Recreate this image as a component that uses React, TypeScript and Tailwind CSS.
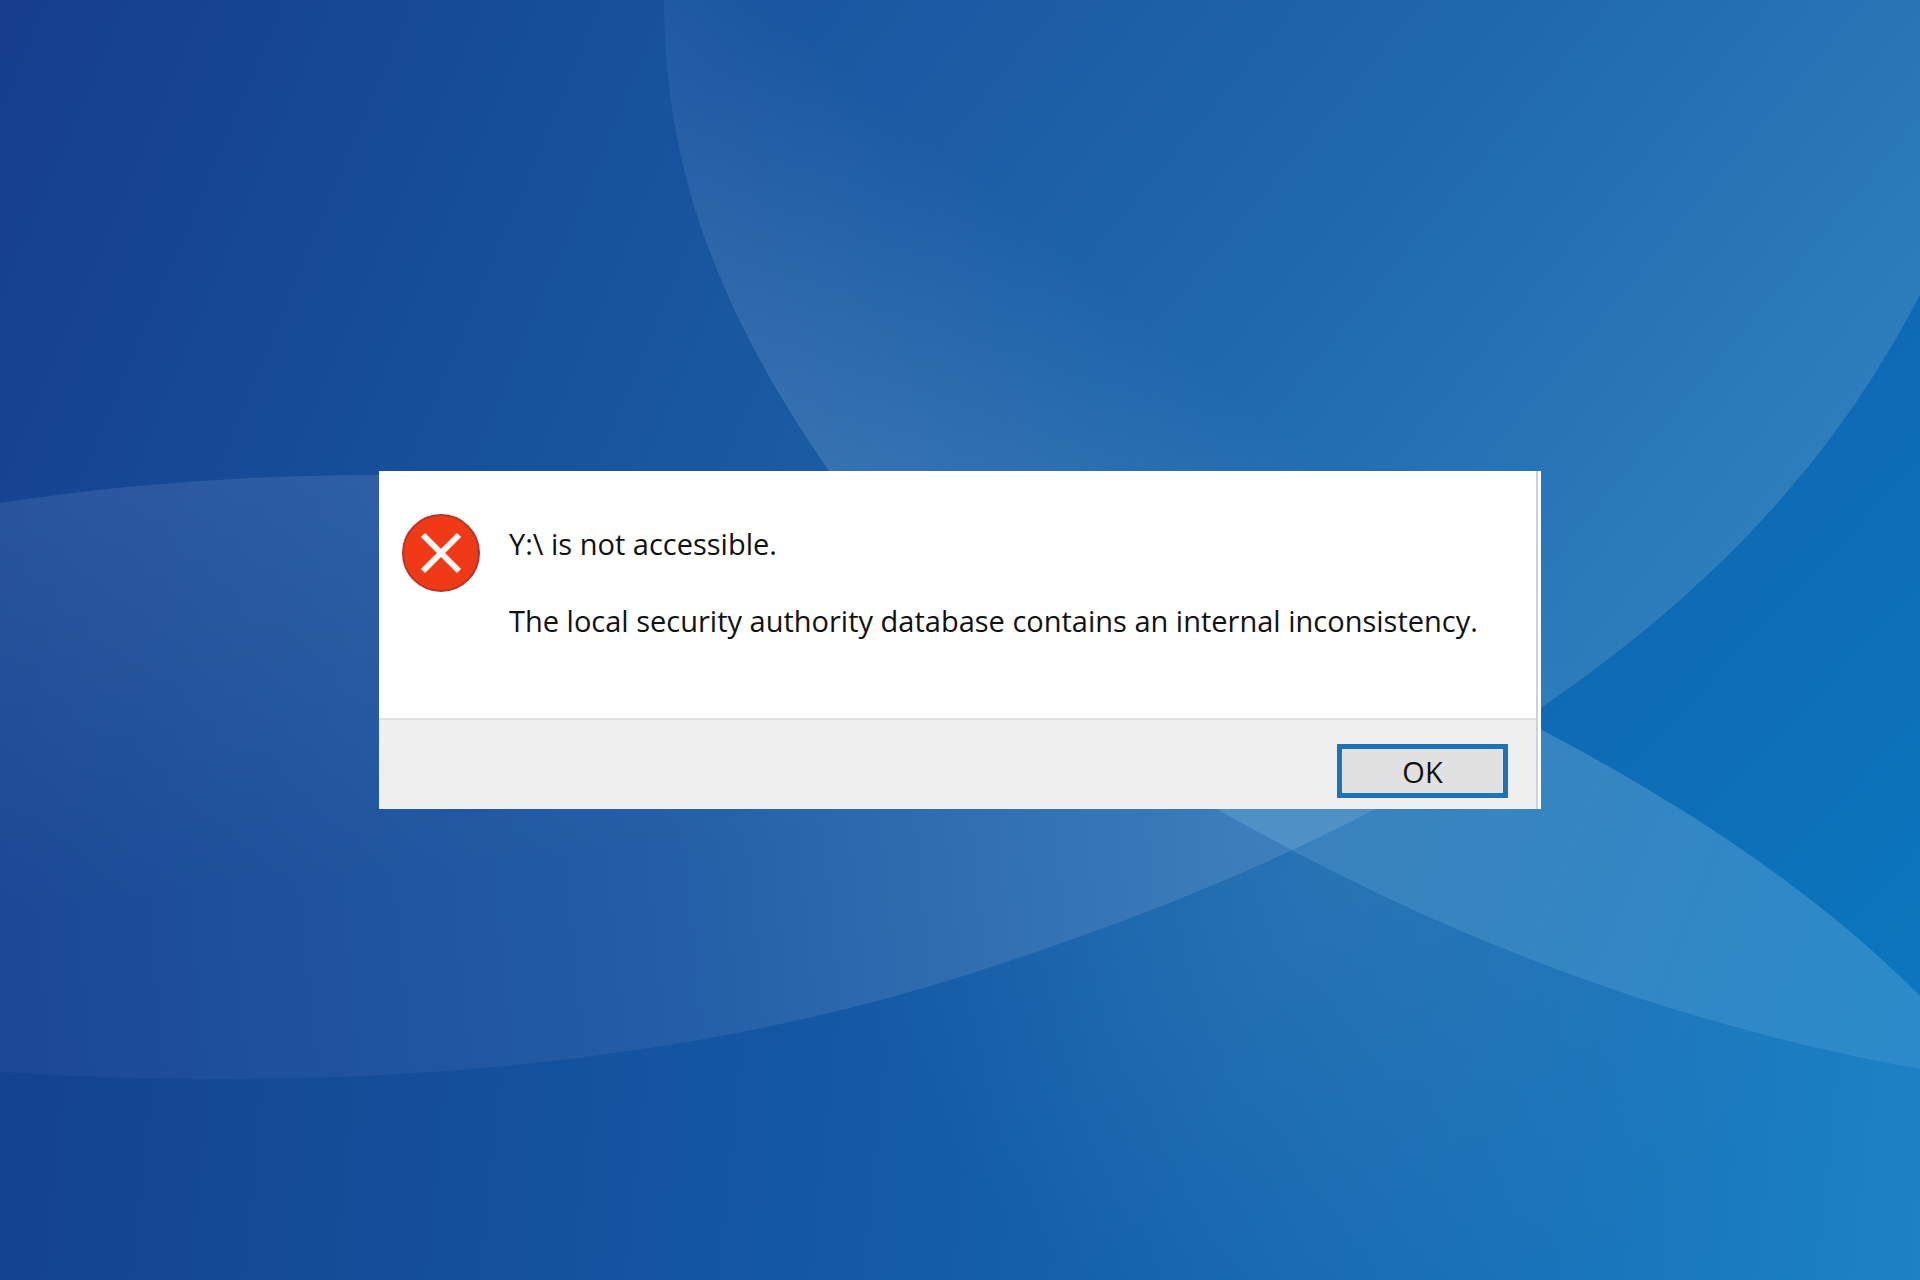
import { useState } from 'react';

// Curves shared by the wallpaper shapes
const ABOVE_SWEEP = 'M0 1072C340 1093 670 1068 960 977C1170 910 1376 826 1542 707C1700 598 1830 470 1920 294V0H0Z';
const ABOVE_ARC = 'M0 503C130 483 260 475 379 475C800 475 1250 570 1542 730C1690 808 1820 895 1920 996V0H0Z';
const RIGHT_OF_BOWL = 'M664 0C664 180 728 325 829 471C930 617 1060 720 1217 809C1420 925 1650 1020 1920 1069V0Z';

function Wallpaper() {
  return (
    <svg
      className="absolute inset-0 h-full w-full"
      viewBox="0 0 1920 1280"
      preserveAspectRatio="none"
      aria-hidden="true"
    >
      <defs>
        <clipPath id="sweep">
          <path d={ABOVE_SWEEP} />
        </clipPath>
        <clipPath id="arc">
          <path d={ABOVE_ARC} />
        </clipPath>
        <linearGradient id="floor" gradientUnits="userSpaceOnUse" x1="0" y1="1080" x2="1920" y2="1280">
          <stop offset="0" stopColor="#14438f" />
          <stop offset="0.5" stopColor="#145ca8" />
          <stop offset="1" stopColor="#1c82c5" />
        </linearGradient>
        <radialGradient id="glow" gradientUnits="userSpaceOnUse" cx="1340" cy="840" r="500">
          <stop offset="0" stopColor="#4083b8" stopOpacity="0.42" />
          <stop offset="1" stopColor="#4083b8" stopOpacity="0" />
        </radialGradient>
        <linearGradient id="lens" gradientUnits="userSpaceOnUse" x1="1330" y1="810" x2="1920" y2="1050">
          <stop offset="0" stopColor="#3a82bd" />
          <stop offset="1" stopColor="#2b8bca" />
        </linearGradient>
        <linearGradient id="gap" gradientUnits="userSpaceOnUse" x1="1540" y1="600" x2="1920" y2="960">
          <stop offset="0" stopColor="#0f68b3" />
          <stop offset="1" stopColor="#0b76bd" />
        </linearGradient>
        <linearGradient id="leaf" gradientUnits="userSpaceOnUse" x1="0" y1="900" x2="1310" y2="770">
          <stop offset="0" stopColor="#1b4895" />
          <stop offset="0.5" stopColor="#235ea6" />
          <stop offset="1" stopColor="#3f81be" />
        </linearGradient>
        <linearGradient id="leafTop" gradientUnits="userSpaceOnUse" x1="200" y1="476" x2="240" y2="900">
          <stop offset="0" stopColor="#ffffff" stopOpacity="0.06" />
          <stop offset="1" stopColor="#ffffff" stopOpacity="0" />
        </linearGradient>
        <linearGradient id="sky" gradientUnits="userSpaceOnUse" x1="0" y1="40" x2="860" y2="400">
          <stop offset="0" stopColor="#163e8c" />
          <stop offset="0.5" stopColor="#164d98" />
          <stop offset="1" stopColor="#1a5ca4" />
        </linearGradient>
        <linearGradient id="bowl" gradientUnits="userSpaceOnUse" x1="780" y1="0" x2="1700" y2="760">
          <stop offset="0" stopColor="#1a56a1" />
          <stop offset="0.5" stopColor="#2069ae" />
          <stop offset="1" stopColor="#3082bf" />
        </linearGradient>
        <linearGradient id="bowlEdge" gradientUnits="userSpaceOnUse" x1="780" y1="500" x2="1020" y2="210">
          <stop offset="0" stopColor="#ffffff" stopOpacity="0.13" />
          <stop offset="1" stopColor="#ffffff" stopOpacity="0" />
        </linearGradient>
      </defs>
      <rect width="1920" height="1280" fill="url(#floor)" />
      <rect width="1920" height="1280" fill="url(#glow)" />
      <path d={RIGHT_OF_BOWL} fill="url(#lens)" />
      <path d={ABOVE_ARC} fill="url(#gap)" />
      <g clipPath="url(#sweep)">
        <rect width="1920" height="1280" fill="url(#leaf)" />
        <rect width="1920" height="1280" fill="url(#leafTop)" />
        <path d={RIGHT_OF_BOWL} fill="#4f90c6" />
        <g clipPath="url(#arc)">
          <rect width="1920" height="1280" fill="url(#sky)" />
          <path d={RIGHT_OF_BOWL} fill="url(#bowl)" />
          <path d={RIGHT_OF_BOWL} fill="url(#bowlEdge)" />
        </g>
      </g>
    </svg>
  );
}

function ErrorIcon() {
  return (
    <svg className="size-20 shrink-0" viewBox="0 0 80 80" aria-hidden="true">
      <circle cx="40" cy="40" r="38" fill="#f03a17" stroke="#b5352a" strokeWidth="2" />
      <path d="M22 22L58 58M58 22L22 58" stroke="#fff8f3" strokeWidth="6" />
    </svg>
  );
}

export default function App() {
  const [open, setOpen] = useState(true);

  return (
    <main className="relative flex min-h-screen items-center justify-center bg-[#164d98]">
      <Wallpaper />
      {open && (
        <div
          role="alertdialog"
          aria-describedby="message"
          className="relative w-full max-w-[1162px] bg-white pr-[3px] font-['Open_Sans','Noto_Sans',sans-serif] text-[29px] leading-[37px] text-[#111111]"
        >
          <div className="border-r-2 border-[#cdd0dc]">
            <div className="flex gap-7 px-[22px] pt-[42px] pb-[79px]">
              <ErrorIcon />
              <div id="message" className="pt-3">
                <p>Y:\ is not accessible.</p>
                <p className="mt-10">The local security authority database contains an internal inconsistency.</p>
              </div>
            </div>
            <div className="flex justify-end border-t-2 border-[#e0e0e0] bg-[#efefef] pt-6 pr-7 pb-[11px]">
              <button
                type="button"
                onClick={() => setOpen(false)}
                className="h-[54px] w-[171px] border-[5px] border-[#1f72b5] bg-[#e1e1e1] leading-none"
              >
                OK
              </button>
            </div>
          </div>
        </div>
      )}
    </main>
  );
}
